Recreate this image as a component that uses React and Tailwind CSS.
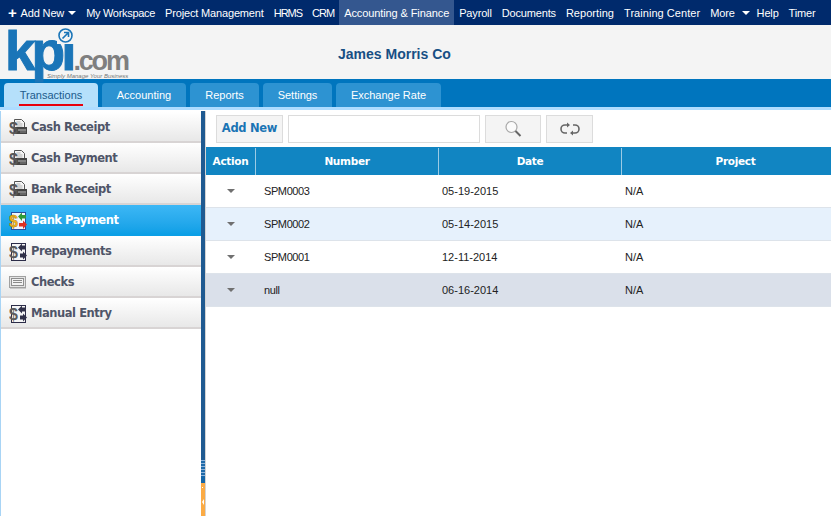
const navItems = [
  { label: "My Workspace", cls: "tracking-[-0.3px]" },
  { label: "Project Management", cls: "" },
  { label: "HRMS", cls: "tracking-[-1px]" },
  { label: "CRM", cls: "tracking-[-1px]" },
  { label: "Accounting & Finance", cls: "tracking-[-0.1px] bg-[#34578f]" },
  { label: "Payroll", cls: "" },
  { label: "Documents", cls: "" },
  { label: "Reporting", cls: "tracking-[0.05px]" },
  { label: "Training Center", cls: "tracking-[0.05px]" },
];

const tabs = ["Transactions", "Accounting", "Reports", "Settings", "Exchange Rate"];

const sideItems = [
  { label: "Cash Receipt", icon: "receipt" },
  { label: "Cash Payment", icon: "receipt" },
  { label: "Bank Receipt", icon: "receipt" },
  { label: "Bank Payment", icon: "active" },
  { label: "Prepayments", icon: "doc" },
  { label: "Checks", icon: "check" },
  { label: "Manual Entry", icon: "doc" },
];

const rows = [
  { number: "SPM0003", date: "05-19-2015", project: "N/A", cls: "bg-white" },
  { number: "SPM0002", date: "05-14-2015", project: "N/A", cls: "bg-[#e6f1fc]" },
  { number: "SPM0001", date: "12-11-2014", project: "N/A", cls: "bg-white" },
  { number: "null", date: "06-16-2014", project: "N/A", cls: "bg-[#dae0ea]" },
];

function Caret({ className }) {
  return <span className={`inline-block w-0 h-0 border-x-[4px] border-x-transparent border-t-[4px] ${className}`} />;
}

function SideIcon({ type }) {
  if (type === "check") {
    return (
      <svg width="18" height="18" viewBox="0 0 18 18" className="shrink-0">
        <rect x="0.500" y="2.500" width="16" height="11" fill="#e4e4e4" stroke="#a0a0a0" />
        <rect x="2.500" y="4.500" width="12" height="7" fill="#f2f2f2" stroke="#8f8f8f" />
        <path d="M4 6.500h9M4 8.500h9" stroke="#8a8a8a" strokeWidth="1" />
        <path d="M1 14.500h16" stroke="#c8c8c8" />
      </svg>
    );
  }
  if (type === "active") {
    return (
      <svg width="18" height="18" viewBox="0 0 18 18" className="shrink-0">
        <rect x="2.500" y="0.500" width="14" height="17" fill="#f0f6fc" stroke="#2a4fa0" />
        <path d="M9 4.500l4-4v2.500h4v3.500h-4v2.500z" fill="#2f9a3a" />
        <path d="M18 12.500l-4-4v2.500h-4v3.500h4v2.500z" fill="#e03020" />
        <text x="0" y="14.500" fontSize="16" fontWeight="700" fontFamily="'Liberation Sans', sans-serif" fill="#f2b31c" stroke="#a87a10" strokeWidth="0.400">$</text>
      </svg>
    );
  }
  if (type === "doc") {
    return (
      <svg width="18" height="18" viewBox="0 0 18 18" className="shrink-0">
        <rect x="2.500" y="0.500" width="14" height="17" fill="#f6f6f6" stroke="#2c2c48" />
        <path d="M9 4.500l4-4v2h4v4h-4v2z" fill="#303048" />
        <path d="M18 12.500l-4-4v2h-3v4h3v2z" fill="#303048" />
        <text x="0" y="14.500" fontSize="16" fontWeight="700" fontFamily="'Liberation Sans', sans-serif" fill="#5c5c5c">$</text>
      </svg>
    );
  }
  return (
    <svg width="18" height="18" viewBox="0 0 18 18" className="shrink-0">
      <path d="M5.500 0.500h7l3 3v6h-10z" fill="#f6f6f6" stroke="#555" />
      <path d="M7.500 3h4M7.500 5h6M7.500 7h6" stroke="#b0b0b0" />
      <rect x="5" y="8" width="13" height="7" fill="#444" />
      <path d="M9 11h8" stroke="#c4c4c4" />
      <path d="M11 13h6" stroke="#8a8a8a" />
      <text x="0" y="15" fontSize="16" fontWeight="700" fontFamily="'Liberation Sans', sans-serif" fill="#585858">$</text>
    </svg>
  );
}

export default function App() {
  return (
    <div className="w-[831px] h-[516px] overflow-hidden bg-white flex flex-col font-['Liberation_Sans',sans-serif]">
      {/* top nav */}
      <div className="h-[25px] shrink-0 bg-[#002a6c] flex items-stretch text-[11px] text-white pl-[3px] pt-px tracking-[-0.16px] whitespace-nowrap">
        <div className="flex items-center gap-[4px] pl-[5px] pr-[5px]">
          <span className="text-[15px] font-bold leading-none mt-[-2px]">+</span>
          <span>Add New</span>
          <Caret className="border-t-white" />
        </div>
        {navItems.map((item) => (
          <div
            key={item.label}
            className={`flex items-center px-[5px] mt-[-1px] pt-px ${item.cls}`}
          >
            {item.label}
          </div>
        ))}
        <div className="flex items-center gap-[7px] pl-[5px] pr-[2px]">
          <span>More</span>
          <Caret className="border-t-white" />
        </div>
        <div className="flex items-center px-[5px]">Help</div>
        <div className="flex items-center px-[5px]">Timer</div>
      </div>

      {/* company header */}
      <div className="h-[54px] shrink-0 bg-[#f4f4f4] flex">
        <div className="w-[338px] shrink-0 pl-[5px] relative">
          <div className="flex items-baseline h-[54px] pt-[3px] leading-none">
            <span className="text-[55px] font-bold text-[#1a75b8] tracking-[-4px] leading-[46px] [-webkit-text-stroke:1px_#1a75b8]">kpi</span>
            <span className="text-[27px] font-bold text-[#7f7f7f] tracking-[-2.200px] leading-[26px] ml-[1px]">.com</span>
          </div>
          <span className="absolute left-[47px] top-[48px] text-[6px] italic text-[#777] leading-none whitespace-nowrap">Simply Manage Your Business</span>
          <svg width="17" height="17" viewBox="0 0 17 17" className="absolute left-[57px] top-[2px]">
            <rect width="17" height="17" fill="#f4f4f4" />
            <circle cx="8.500" cy="8.500" r="6.500" fill="none" stroke="#1a75b8" strokeWidth="1.600" />
            <path d="M5.500 11.500l5.500-5.500M7 5.500h4.500V10" fill="none" stroke="#1a75b8" strokeWidth="1.600" />
          </svg>
        </div>
        <div className="pt-[20px] text-[14px] leading-[18px] font-bold text-[#174f84]">James Morris Co</div>
      </div>

      {/* tabs */}
      <div className="h-[28px] shrink-0 bg-[#0075be] flex items-end gap-[4px] pl-[4px] text-[11px] whitespace-nowrap">
        {tabs.map((tab, i) => (
          <div
            key={tab}
            className={`h-[24px] rounded-t-[4px] flex items-center justify-center ${
              i === 0 ? "w-[94px] bg-[#b5e0fb] text-[#205b8c]" : "bg-[#2d93d2] text-white"
            } ${i === 1 ? "w-[84px]" : ""} ${i === 2 ? "w-[69px]" : ""} ${i === 3 ? "w-[69px]" : ""} ${i === 4 ? "w-[105px]" : ""}`}
          >
            <span className={i === 0 ? "border-b-2 border-[#e8000d] px-[1px] pb-[1px] mt-[3px]" : ""}>{tab}</span>
          </div>
        ))}
      </div>
      <div className="h-[3px] shrink-0 bg-[#aedcff]" />
      <div className="h-px shrink-0 bg-white" />

      <div className="flex-1 flex min-h-0">
        {/* sidebar */}
        <div className="w-[201px] shrink-0 border-l border-[#a8d4f5] flex flex-col pt-px">
          {sideItems.map((item) => (
            <div
              key={item.label}
              className={`h-[31px] shrink-0 flex items-center gap-[4px] pl-[8px] pt-[3px] text-[11.500px] font-bold border-b-2 font-['DejaVu_Sans',sans-serif] tracking-[-0.450px] ${
                item.icon === "active"
                  ? "bg-gradient-to-b from-[#3cb7f5] to-[#0b9fe6] text-white border-[#0b9fe6]"
                  : "bg-gradient-to-b from-white to-[#e8e8e8] text-[#4f5568] border-[#d8d4d4]"
              }`}
            >
              <SideIcon type={item.icon} />
              <span>{item.label}</span>
            </div>
          ))}
        </div>

        {/* splitter */}
        <div className="w-[4px] shrink-0 flex flex-col bg-[#1f5a91]">
          <div className="flex-1" />
          <div className="h-[16px] bg-[repeating-linear-gradient(to_bottom,#8fb4dc_0,#8fb4dc_1px,#1f6aa8_1px,#1f6aa8_3px)]" />
          <div className="h-[7px] bg-[#1566a8]" />
          <div className="h-[33px] bg-[#fbab45]">
            <svg width="4" height="33" viewBox="0 0 4 33">
              <rect x="1" y="4" width="1" height="1" fill="#fff" />
              <path d="M3 16v6L1 19z" fill="#fff" />
            </svg>
          </div>
        </div>
        <div className="w-px shrink-0 bg-[#d4d4d4]" />

        {/* main */}
        <div className="flex-1 min-w-0 flex flex-col">
          <div className="h-[36px] shrink-0 flex items-start gap-[5px] pl-[10px] pt-[4px]">
            <button className="w-[67px] h-[28px] bg-[#f4f4f4] border border-[#dcdcdc] text-[11.500px] font-bold text-[#1a74b4] font-['DejaVu_Sans',sans-serif] tracking-[-0.300px]">
              Add New
            </button>
            <input className="w-[192px] h-[28px] bg-white border border-[#dcdcdc]" />
            <button className="w-[56px] h-[28px] bg-[#f4f4f4] border border-[#dcdcdc] flex items-center justify-center">
              <svg width="18" height="18" viewBox="0 0 18 18">
                <circle cx="7.500" cy="7" r="5.500" fill="#fbfbfb" stroke="#a8a8a8" strokeWidth="1.200" />
                <path d="M11.500 11l5 5" stroke="#666" strokeWidth="2" />
              </svg>
            </button>
            <button className="w-[47px] h-[28px] bg-[#f4f4f4] border border-[#dcdcdc] flex items-center justify-center">
              <svg width="20" height="14" viewBox="0 0 20 14">
                <path d="M8 3H5a4 4 0 0 0 0 8h2M12 11h3a4 4 0 0 0 0-8h-2" fill="none" stroke="#666" strokeWidth="1.600" />
                <path d="M7 0.500v5l3-2.500zM13 8.500v5l-3-2.500z" fill="#666" />
              </svg>
            </button>
          </div>

          <div className="h-[28px] shrink-0 bg-[#1185c2] grid grid-cols-[50px_183px_183px_1fr] text-white text-[10.500px] font-bold pt-[1px] font-['DejaVu_Sans',sans-serif] tracking-[-0.300px]">
            <div className="flex items-center justify-center border-r border-[#9ccbe4]">Action</div>
            <div className="flex items-center justify-center border-r border-[#9ccbe4]">Number</div>
            <div className="flex items-center justify-center border-r border-[#9ccbe4]">Date</div>
            <div className="flex items-center justify-center pl-[18px]">Project</div>
          </div>

          {rows.map((row) => (
            <div
              key={row.number}
              className={`h-[33px] shrink-0 grid grid-cols-[50px_183px_183px_1fr] items-center border-b border-[#dde3ea] text-[11px] text-[#222] ${row.cls}`}
            >
              <div className="flex justify-center">
                <Caret className="border-t-[#707070]" />
              </div>
              <div className="pl-[8px] tracking-[-0.400px]">{row.number}</div>
              <div className="pl-[3px]">{row.date}</div>
              <div className="pl-[3px]">{row.project}</div>
            </div>
          ))}
        </div>
      </div>
    </div>
  );
}
